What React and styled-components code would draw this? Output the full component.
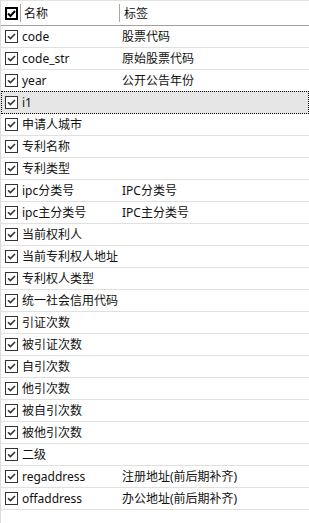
import React from "react";
import styled, { createGlobalStyle } from "styled-components";

const Global = createGlobalStyle`
  html, body { margin: 0; padding: 0; background: #fff; }
  body { font-family: "Noto Sans", "Noto Sans CJK SC", sans-serif; }
`;

const Panel = styled.div`
  width: 309px;
  height: 523px;
  box-sizing: border-box;
  border-left: 1px solid #dcdcdc;
  border-top: 1px solid #e3e3e3;
  background: #fff;
  overflow: hidden;
  font-size: 12px;
  color: #111;
`;

const Header = styled.div`
  display: flex;
  align-items: center;
  height: 25px;
  box-sizing: border-box;
  border-bottom: 1px solid #a0a0a0;
`;

const HeadCell = styled.div`
  display: flex;
  align-items: center;
  box-sizing: border-box;
  width: ${(p) => (p.$first ? "118px" : "auto")};
  flex: ${(p) => (p.$first ? "none" : "1")};
  padding-left: ${(p) => (p.$first ? "4px" : "0")};
  height: 100%;
`;

const Divider = styled.span`
  width: 1px;
  height: 18px;
  background: #a8a8a8;
  margin-left: ${(p) => p.$ml || 0}px;
  margin-right: ${(p) => p.$mr || 0}px;
  flex: none;
`;

const Label = styled.span`
  white-space: nowrap;
  line-height: 21px;
  padding-left: ${(p) => p.$pl || 0}px;
`;

const Row = styled.div`
  position: relative;
  display: flex;
  align-items: center;
  height: 22px;
  box-sizing: border-box;
  border-bottom: 1px solid #e0e0e0;
  background: ${(p) => (p.$selected ? "#e6e6e6" : "transparent")};

  ${(p) =>
    p.$selected &&
    `
    &::before {
      content: "";
      position: absolute;
      left: 0;
      right: 0;
      top: -1px;
      bottom: -1px;
      border: 1px dotted #000;
      pointer-events: none;
    }
  `}
`;

const NameCell = styled.div`
  display: flex;
  align-items: center;
  width: 118px;
  flex: none;
  box-sizing: border-box;
  padding-left: 4px;
  gap: 4px;
`;

const TagCell = styled.div`
  flex: 1;
  padding-left: 3px;
  display: flex;
  align-items: center;
`;

const Box = styled.span`
  display: inline-flex;
  align-items: center;
  justify-content: center;
  width: 13px;
  height: 13px;
  box-sizing: border-box;
  flex: none;
  background: #fff;
  border: ${(p) => (p.$strong ? "2px solid #000" : "1px solid #333")};
`;

function Check({ strong }) {
  return (
    <Box $strong={strong}>
      <svg
        width={strong ? 9 : 11}
        height={strong ? 9 : 11}
        viewBox={strong ? "0 0 9 9" : "0 0 11 11"}
        style={{ display: "block" }}
      >
        {strong ? (
          <polyline
            points="1,4.5 3.5,7 8,2"
            fill="none"
            stroke="#000"
            strokeWidth="2"
          />
        ) : (
          <polyline
            points="2,5.2 4.4,7.6 9,3"
            fill="none"
            stroke="#333"
            strokeWidth="1.6"
          />
        )}
      </svg>
    </Box>
  );
}

const rows = [
  ["code", "股票代码"],
  ["code_str", "原始股票代码"],
  ["year", "公开公告年份"],
  ["i1", "", true],
  ["申请人城市", ""],
  ["专利名称", ""],
  ["专利类型", ""],
  ["ipc分类号", "IPC分类号"],
  ["ipc主分类号", "IPC主分类号"],
  ["当前权利人", ""],
  ["当前专利权人地址", ""],
  ["专利权人类型", ""],
  ["统一社会信用代码", ""],
  ["引证次数", ""],
  ["被引证次数", ""],
  ["自引次数", ""],
  ["他引次数", ""],
  ["被自引次数", ""],
  ["被他引次数", ""],
  ["二级", ""],
  ["regaddress", "注册地址(前后期补齐)"],
  ["offaddress", "办公地址(前后期补齐)"],
];

export default function App() {
  return (
    <>
      <Global />
      <Panel>
        <Header>
          <HeadCell $first>
            <Check strong />
            <Divider $ml={2} $mr={3} />
            <Label>名称</Label>
          </HeadCell>
          <HeadCell>
            <Divider $mr={4} />
            <Label>标签</Label>
          </HeadCell>
        </Header>
        {rows.map(([name, tag, sel]) => (
          <Row key={name} $selected={sel}>
            <NameCell>
              <Check />
              <Label>{name}</Label>
            </NameCell>
            <TagCell>
              <Label>{tag}</Label>
            </TagCell>
          </Row>
        ))}
      </Panel>
    </>
  );
}
